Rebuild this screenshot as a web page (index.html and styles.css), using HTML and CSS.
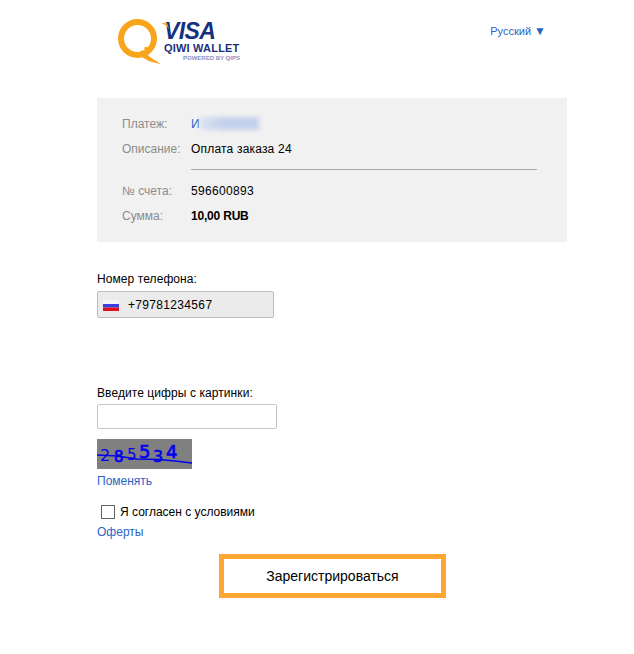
FILE: index.html
```html
<!DOCTYPE html>
<html lang="en">
<head>
  <meta charset="UTF-8" />
  <title>Visa QIWI Wallet</title>
  <link rel="stylesheet" href="styles.css">
</head>
<body>
  <div class="page">
    <div class="header">
      <div class="logo">
        <svg class="logo-q" width="48" height="48" viewBox="0 0 48 48">
          <circle cx="20.5" cy="19.5" r="16.5" fill="none" stroke="#f9a51c" stroke-width="6"/>
          <path d="M25 31 C30 36 37 41 44 45 C36 44 28 41 21 35 Z" fill="#f9a51c"/>
          <circle cx="29" cy="29.500" r="1.800" fill="#f9a51c"/>
        </svg>
        <div class="logo-text">
          <svg class="visa-flick" width="8" height="6" viewBox="0 0 8 6">
            <path d="M0 0 L6 0 L8 6 C6 3 3 1 0 0 Z" fill="#f9a51c"/>
          </svg>
          <div class="logo-visa">VISA</div>
          <div class="logo-qiwi">QIWI WALLET</div>
          <div class="logo-powered">POWERED BY QIPS</div>
        </div>
      </div>
      <a class="lang" href="#">Русский <span class="lang-arrow">▼</span></a>
    </div>

    <div class="summary">
      <div class="row"><span class="row-label">Платеж:</span><span class="row-value link">И<span class="smudge"></span></span></div>
      <div class="row"><span class="row-label">Описание:</span><span class="row-value desc">Оплата заказа 24</span></div>
      <div class="divider"></div>
      <div class="row"><span class="row-label">№ счета:</span><span class="row-value digits">596600893</span></div>
      <div class="row"><span class="row-label">Сумма:</span><span class="row-value bold">10,00 RUB</span></div>
    </div>

    <div class="phone-block">
      <div class="field-label">Номер телефона:</div>
      <div class="phone-box">
        <svg class="flag" width="16" height="11" viewBox="0 0 16 11">
          <rect width="16" height="4" fill="#f4f4f8"/>
          <rect y="4" width="16" height="3.5" fill="#3a3fe0"/>
          <rect y="7.5" width="16" height="3.5" fill="#e0101c"/>
        </svg>
        <span class="digits">+79781234567</span>
      </div>
    </div>

    <div class="captcha-block">
      <div class="field-label">Введите цифры с картинки:</div>
      <input class="captcha-input" type="text" />
      <div class="captcha">
        <span class="d1">2</span><span class="d2">8</span><span class="d3">5</span><span class="d4">5</span><span class="d5">3</span><span class="d6">4</span>
        <svg class="captcha-line" width="95" height="30" viewBox="0 0 95 30">
          <path d="M0 16 L20 17 L40 20 L62 20.500 L78 22 L95 24" fill="none" stroke="#0000ee" stroke-width="1.600"/>
        </svg>
      </div>
      <a class="link change" href="#">Поменять</a>
    </div>

    <label class="agree"><span class="checkbox"></span>Я согласен с условиями</label>
    <a class="link offer" href="#">Оферты</a>

    <div class="submit-row">
      <button class="submit">Зарегистрироваться</button>
    </div>
  </div>
</body>
</html>
```

FILE: styles.css
```css
body {
  margin: 0;
  background: #fff;
  color: #000;
  font-family: "Liberation Sans", Arial, sans-serif;
  font-size: 12px;
}
a {
  text-decoration: none;
}
.link {
  color: #2a63c4;
}
.page {
  width: 470px;
  margin-left: 97px;
}
.header {
  height: 98px;
  display: flex;
  justify-content: space-between;
  align-items: flex-start;
}
.logo {
  display: flex;
  margin: 19px 0 0 20px;
}
.logo-q {
  display: block;
}
.logo-text {
  position: relative;
  margin-left: -1px;
  padding-top: 2px;
}
.visa-flick {
  position: absolute;
  left: -3px;
  top: 4px;
}
.logo-visa {
  color: #14307f;
  font-size: 23px;
  line-height: 21px;
  font-weight: bold;
  font-style: italic;
  letter-spacing: -0.6px;
}
.logo-qiwi {
  color: #1c2f7c;
  font-size: 11px;
  line-height: 12px;
  font-weight: bold;
  letter-spacing: 0.2px;
  white-space: nowrap;
}
.logo-powered {
  color: #8a90c4;
  font-size: 6px;
  line-height: 7px;
  font-weight: bold;
  white-space: nowrap;
  margin-top: 1px;
  margin-left: 19px;
}
.lang {
  color: #2a63c4;
  font-size: 11px;
  margin: 24px 21px 0 0;
  line-height: 14px;
}
.lang-arrow {
  font-size: 12px;
}
.summary {
  background: #f1f1f1;
  height: 144px;
  padding: 14px 30px 0 25px;
  box-sizing: border-box;
}
.row {
  display: flex;
  height: 25px;
  line-height: 25px;
}
.row-label {
  width: 69px;
  color: #8c8c8c;
}
.digits {
  letter-spacing: 0.33px;
}
.desc {
  letter-spacing: 0.19px;
}
.bold {
  font-weight: bold;
  letter-spacing: -0.2px;
}
.smudge {
  display: inline-block;
  width: 59px;
  height: 13px;
  vertical-align: -2px;
  background: linear-gradient(to right, #dbe3f1, #c3d1ec 40%, #c3d1ec);
  filter: blur(2px);
}
.divider {
  height: 1px;
  background: #a8a8a8;
  margin: 7px 0 9px 69px;
}
.phone-block {
  margin-top: 29px;
}
.field-label {
  line-height: 16px;
  letter-spacing: 0.08px;
}
.phone-box {
  width: 177px;
  height: 27px;
  margin-top: 4px;
  box-sizing: border-box;
  background: #ebebeb;
  border: 1px solid #bdbdbd;
  border-radius: 2px;
  display: flex;
  align-items: center;
  padding-left: 5px;
}
.flag {
  margin-right: 9px;
  margin-top: 1px;
}
.captcha-block {
  margin-top: 67px;
}
.captcha-input {
  display: block;
  width: 180px;
  height: 25px;
  margin: 3px 0 10px;
  padding: 0;
  box-sizing: border-box;
  background: #fff;
  border: 1px solid #c4c4c4;
  border-radius: 2px;
}
.captcha {
  position: relative;
  width: 95px;
  height: 30px;
  background: #808080;
  color: #0000ee;
  font-family: "DejaVu Sans", sans-serif;
  display: flex;
  padding-left: 3px;
  box-sizing: border-box;
}
.captcha span {
  display: block;
  line-height: 30px;
}
.d1 { font-size: 16px; width: 14px; margin-top: 2px; }
.d2 { font-size: 15px; width: 13px; margin-top: 3px; -webkit-text-stroke: 0.7px #0000ee; }
.d3 { font-size: 15px; width: 12px; margin-top: 1px; }
.d4 { font-size: 18px; width: 14px; margin-top: -2px; -webkit-text-stroke: 0.7px #0000ee; }
.d5 { font-size: 16px; width: 13px; margin-top: 3px; -webkit-text-stroke: 0.6px #0000ee; }
.d6 { font-size: 18px; margin-top: -2px; -webkit-text-stroke: 0.7px #0000ee; }
.captcha-line {
  position: absolute;
  left: 0;
  top: 0;
}
.change {
  display: block;
  line-height: 16px;
  margin-top: 4px;
}
.agree {
  display: flex;
  align-items: center;
  margin: 15px 0 0 4px;
  line-height: 16px;
}
.checkbox {
  width: 14px;
  height: 14px;
  box-sizing: border-box;
  border: 1px solid #666;
  background: #fff;
  margin-right: 5px;
}
.offer {
  display: block;
  margin-top: 4px;
  line-height: 16px;
}
.submit-row {
  margin: 14px 0 0 122px;
}
.submit {
  display: block;
  width: 227px;
  height: 44px;
  box-sizing: border-box;
  background: #fff;
  border: 5px solid #fda633;
  font-family: inherit;
  font-size: 14px;
  color: #000;
  padding: 0;
}
```
